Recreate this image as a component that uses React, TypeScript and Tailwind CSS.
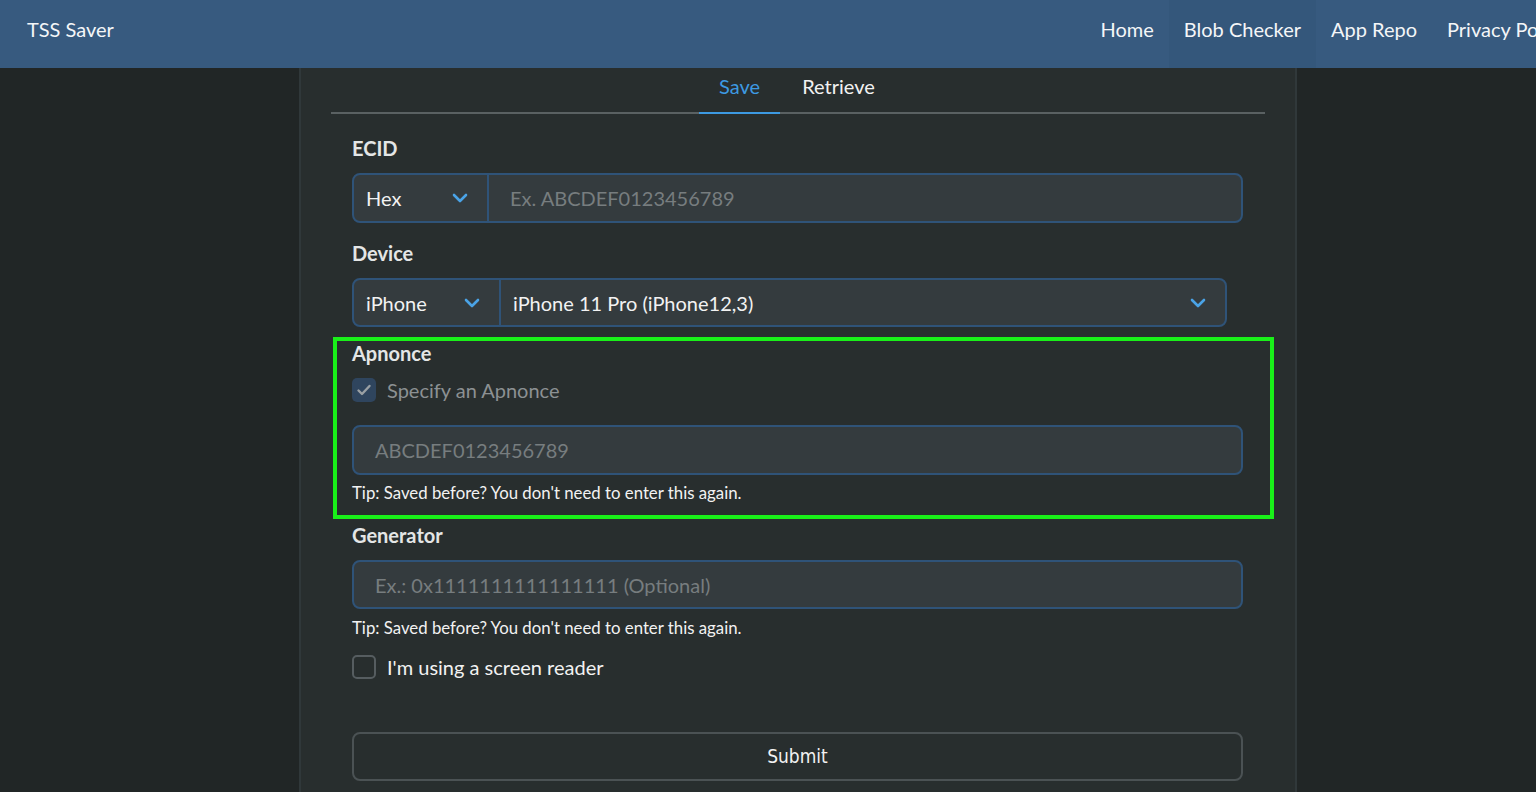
import React from "react";

const font = { fontFamily: "Lato, 'Noto Sans', sans-serif" };

const Chevron = () => (
  <svg width="18" height="12" viewBox="0 0 18 12" fill="none">
    <path d="M3 3l6 6 6-6" stroke="#4aa3e6" strokeWidth="2.6" strokeLinecap="round" strokeLinejoin="round" />
  </svg>
);

const Label = ({ children, className = "" }: { children: React.ReactNode; className?: string }) => (
  <div className={`text-[20px] leading-6 font-bold text-[#e4e6e6] ${className}`}>{children}</div>
);

const Tip = ({ className = "" }: { className?: string }) => (
  <div className={`text-[16.8px] leading-5 text-[#f2f2f2] ${className}`}>
    Tip: Saved before? You don't need to enter this again.
  </div>
);

export default function App() {
  return (
    <div className="min-h-[792px] overflow-hidden bg-[#212626] text-white" style={font}>
      <header className="flex h-[68px] items-start justify-between bg-[#375a7f] pl-[27px]">
        <div className="pt-[17px] text-[20px] leading-6 text-[#f4f6f8]">TSS Saver</div>
        <nav className="flex h-full overflow-hidden text-[20px] leading-6 text-[#f4f6f8]">
          <a className="h-full px-[15px] pt-[17px]">Home</a>
          <a className="h-full bg-[#34577b] px-[15px] pt-[17px]">Blob Checker</a>
          <a className="h-full px-[15px] pt-[17px]">App Repo</a>
          <a className="h-full w-[104px] overflow-hidden whitespace-nowrap pt-[17px] pl-[15px]">Privacy Policy</a>
        </nav>
      </header>

      <main className="ml-[299px] w-[998px] border-x-2 border-[#30383a] bg-[#282e2e] px-[30px] pb-10">
        <div className="flex justify-center border-b-2 border-[#5a6162] text-[20px] leading-6">
          <div className="-mb-[2px] w-[81px] border-b-2 border-[#3d9ae2] pt-[6px] pb-[14px] text-center text-[#3d9ae2]">Save</div>
          <div className="w-[117px] pt-[6px] pb-[14px] text-center text-[#f2f2f2]">Retrieve</div>
        </div>

        <div className="px-[21px]">
          <Label className="mt-[22px]">ECID</Label>
          <div className="mt-[13px] flex h-[50px] w-[891px] overflow-hidden rounded-lg border-2 border-[#2f5378] bg-[#343b3e]">
            <div className="flex w-[135px] items-center justify-between border-r-2 border-[#2f5378] pr-[18px] pl-[12px] text-[20px] text-[#f2f2f2]">
              Hex
              <Chevron />
            </div>
            <div className="flex items-center pl-[21px] text-[20px] text-[#777d7f]">Ex. ABCDEF0123456789</div>
          </div>

          <Label className="mt-[18px]">Device</Label>
          <div className="mt-[13px] flex h-[49px] w-[875px] overflow-hidden rounded-lg border-2 border-[#2f5378] bg-[#343b3e]">
            <div className="flex w-[147px] items-center justify-between border-r-2 border-[#2f5378] pr-[18px] pl-[12px] text-[20px] text-[#f2f2f2]">
              iPhone
              <Chevron />
            </div>
            <div className="flex flex-1 items-center justify-between pr-[18px] pl-[12px] text-[20px] text-[#f2f2f2]">
              iPhone 11 Pro (iPhone12,3)
              <Chevron />
            </div>
          </div>

          <div className="relative mt-[14px]">
            <div className="pointer-events-none absolute -top-[4px] -right-[30px] -bottom-[16px] -left-[19px] border-4 border-[#19f019]" />
            <Label>Apnonce</Label>
            <div className="mt-[13px] flex items-center gap-[11px]">
              <div className="flex h-6 w-6 items-center justify-center rounded-[5px] bg-[#2f455e]">
                <svg width="18" height="18" viewBox="0 0 18 18" fill="none">
                  <path d="M3.5 9.5l3.5 3.5 7.5-8" stroke="#9aa0a4" strokeWidth="2.4" strokeLinecap="round" strokeLinejoin="round" />
                </svg>
              </div>
              <span className="text-[20px] leading-6 text-[#8c9193]">Specify an Apnonce</span>
            </div>
            <div className="mt-[23px] flex h-[50px] w-[891px] items-center rounded-lg border-2 border-[#2f5378] bg-[#343b3e] pl-[21px] text-[20px] text-[#777d7f]">
              ABCDEF0123456789
            </div>
            <Tip className="mt-[8px]" />
          </div>

          <Label className="mt-[20px]">Generator</Label>
          <div className="mt-[13px] flex h-[49px] w-[891px] items-center rounded-lg border-2 border-[#2f5378] bg-[#343b3e] pl-[21px] text-[20px] text-[#777d7f]">
            Ex.: 0x1111111111111111 (Optional)
          </div>
          <Tip className="mt-[9px]" />

          <div className="mt-[17px] flex items-center gap-[11px]">
            <div className="h-6 w-6 rounded-[5px] border-2 border-[#565d60]" />
            <span className="text-[20px] leading-6 text-[#f2f2f2]">I'm using a screen reader</span>
          </div>

          <button
            className="mt-[53px] flex h-[49px] w-[891px] items-center justify-center rounded-lg border-2 border-[#4b5254] text-[#f2f2f2]"
            style={{ fontFamily: "'DejaVu Sans Condensed', 'DejaVu Sans', sans-serif", fontSize: 19 }}
          >
            Submit
          </button>
        </div>
      </main>
    </div>
  );
}
